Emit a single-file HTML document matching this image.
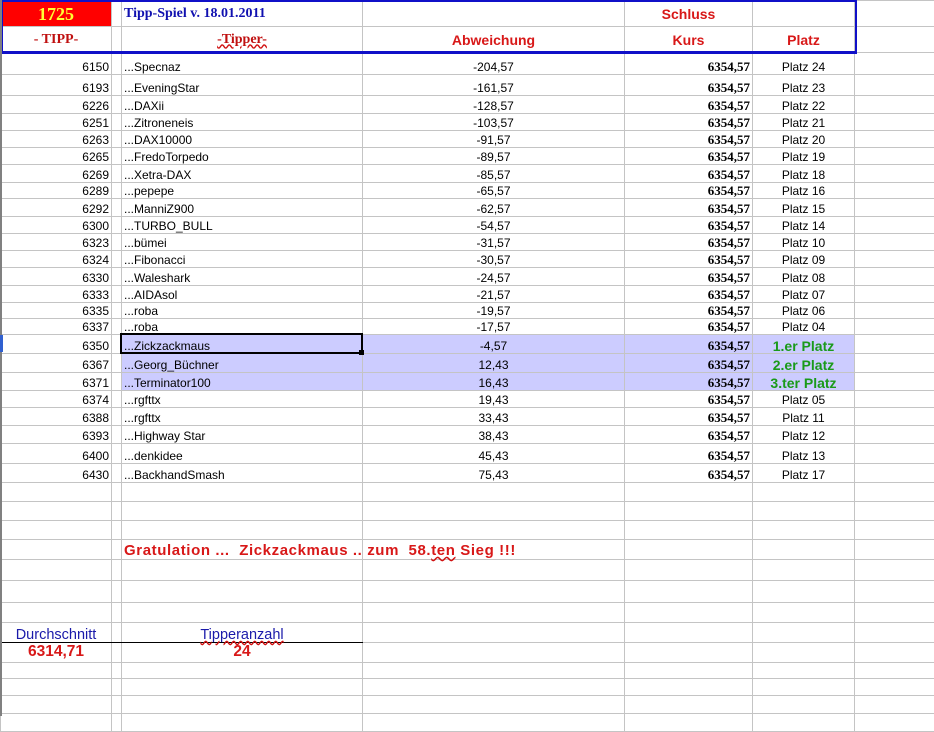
<!DOCTYPE html>
<html><head><meta charset="utf-8"><style>
body{margin:0;width:934px;height:716px;overflow:hidden;background:#fff;position:relative;font-family:"Liberation Sans",Arial,sans-serif;font-size:12px;}
table{border-collapse:collapse;table-layout:fixed;position:absolute;left:0;top:0;width:934px;}
td{border:1px solid #c4c4c4;padding:0 2px;white-space:nowrap;overflow:visible;vertical-align:bottom;line-height:14px;color:#000;}
.r{text-align:right}.c{text-align:center}
.k{font-family:"Liberation Serif",serif;font-weight:bold;font-size:13px;text-align:right}
.hl td.h{background:#ccccff}
.g{color:#1a9a1a;font-weight:bold;font-size:14px;text-align:center}
.red{color:#d81818;font-weight:bold;font-size:14px}
</style></head><body>
<table>
<colgroup><col style="width:111px"><col style="width:10px"><col style="width:241px"><col style="width:262px"><col style="width:128px"><col style="width:102px"><col style="width:80px"></colgroup>
<tr style="height:26px"><td style="background:#ff0000;color:#ffff33;font-family:'Liberation Serif',serif;font-weight:bold;font-size:18px;text-align:center;vertical-align:middle">1725</td><td style="border-left:none;border-right:none"></td><td style="color:#1010b0;font-family:'Liberation Serif',serif;font-weight:bold;font-size:14px;vertical-align:middle">Tipp-Spiel v. 18.01.2011</td><td></td><td class="c red" style="vertical-align:middle">Schluss</td><td></td><td></td></tr>
<tr style="height:26px"><td class="c" style="color:#c01010;font-family:'Liberation Serif',serif;font-weight:bold;font-size:14px;vertical-align:middle">- TIPP-</td><td></td><td class="c" style="color:#c01010;font-family:'Liberation Serif',serif;font-weight:bold;font-size:14px;vertical-align:middle;text-decoration:underline wavy #d01010">-Tipper-</td><td class="c red" style="vertical-align:middle">Abweichung</td><td class="c red" style="vertical-align:middle">Kurs</td><td class="c red" style="vertical-align:middle">Platz</td><td></td></tr>
<tr style="height:22px"><td class="r">6150</td><td></td><td>...Specnaz</td><td class="c">-204,57</td><td class="k">6354,57</td><td class="c">Platz 24</td><td></td></tr>
<tr style="height:21px"><td class="r">6193</td><td></td><td>...EveningStar</td><td class="c">-161,57</td><td class="k">6354,57</td><td class="c">Platz 23</td><td></td></tr>
<tr style="height:18px"><td class="r">6226</td><td></td><td>...DAXii</td><td class="c">-128,57</td><td class="k">6354,57</td><td class="c">Platz 22</td><td></td></tr>
<tr style="height:17px"><td class="r">6251</td><td></td><td>...Zitroneneis</td><td class="c">-103,57</td><td class="k">6354,57</td><td class="c">Platz 21</td><td></td></tr>
<tr style="height:17px"><td class="r">6263</td><td></td><td>...DAX10000</td><td class="c">-91,57</td><td class="k">6354,57</td><td class="c">Platz 20</td><td></td></tr>
<tr style="height:17px"><td class="r">6265</td><td></td><td>...FredoTorpedo</td><td class="c">-89,57</td><td class="k">6354,57</td><td class="c">Platz 19</td><td></td></tr>
<tr style="height:18px"><td class="r">6269</td><td></td><td>...Xetra-DAX</td><td class="c">-85,57</td><td class="k">6354,57</td><td class="c">Platz 18</td><td></td></tr>
<tr style="height:16px"><td class="r">6289</td><td></td><td>...pepepe</td><td class="c">-65,57</td><td class="k">6354,57</td><td class="c">Platz 16</td><td></td></tr>
<tr style="height:18px"><td class="r">6292</td><td></td><td>...ManniZ900</td><td class="c">-62,57</td><td class="k">6354,57</td><td class="c">Platz 15</td><td></td></tr>
<tr style="height:17px"><td class="r">6300</td><td></td><td>...TURBO_BULL</td><td class="c">-54,57</td><td class="k">6354,57</td><td class="c">Platz 14</td><td></td></tr>
<tr style="height:17px"><td class="r">6323</td><td></td><td>...bümei</td><td class="c">-31,57</td><td class="k">6354,57</td><td class="c">Platz 10</td><td></td></tr>
<tr style="height:17px"><td class="r">6324</td><td></td><td>...Fibonacci</td><td class="c">-30,57</td><td class="k">6354,57</td><td class="c">Platz 09</td><td></td></tr>
<tr style="height:18px"><td class="r">6330</td><td></td><td>...Waleshark</td><td class="c">-24,57</td><td class="k">6354,57</td><td class="c">Platz 08</td><td></td></tr>
<tr style="height:17px"><td class="r">6333</td><td></td><td>...AIDAsol</td><td class="c">-21,57</td><td class="k">6354,57</td><td class="c">Platz 07</td><td></td></tr>
<tr style="height:16px"><td class="r">6335</td><td></td><td>...roba</td><td class="c">-19,57</td><td class="k">6354,57</td><td class="c">Platz 06</td><td></td></tr>
<tr style="height:16px"><td class="r">6337</td><td></td><td>...roba</td><td class="c">-17,57</td><td class="k">6354,57</td><td class="c">Platz 04</td><td></td></tr>
<tr class="hl" style="height:19px"><td class="r">6350</td><td></td><td class="h">...Zickzackmaus</td><td class="c h">-4,57</td><td class="k h">6354,57</td><td class="g h">1.er Platz</td><td></td></tr>
<tr class="hl" style="height:19px"><td class="r">6367</td><td></td><td class="h">...Georg_Büchner</td><td class="c h">12,43</td><td class="k h">6354,57</td><td class="g h">2.er Platz</td><td></td></tr>
<tr class="hl" style="height:18px"><td class="r">6371</td><td></td><td class="h">...Terminator100</td><td class="c h">16,43</td><td class="k h">6354,57</td><td class="g h">3.ter Platz</td><td></td></tr>
<tr style="height:17px"><td class="r">6374</td><td></td><td>...rgfttx</td><td class="c">19,43</td><td class="k">6354,57</td><td class="c">Platz 05</td><td></td></tr>
<tr style="height:18px"><td class="r">6388</td><td></td><td>...rgfttx</td><td class="c">33,43</td><td class="k">6354,57</td><td class="c">Platz 11</td><td></td></tr>
<tr style="height:18px"><td class="r">6393</td><td></td><td>...Highway Star</td><td class="c">38,43</td><td class="k">6354,57</td><td class="c">Platz 12</td><td></td></tr>
<tr style="height:20px"><td class="r">6400</td><td></td><td>...denkidee</td><td class="c">45,43</td><td class="k">6354,57</td><td class="c">Platz 13</td><td></td></tr>
<tr style="height:19px"><td class="r">6430</td><td></td><td>...BackhandSmash</td><td class="c">75,43</td><td class="k">6354,57</td><td class="c">Platz 17</td><td></td></tr>
<tr style="height:19px"><td></td><td></td><td></td><td></td><td></td><td></td><td></td></tr>
<tr style="height:19px"><td></td><td></td><td></td><td></td><td></td><td></td><td></td></tr>
<tr style="height:19px"><td></td><td></td><td></td><td></td><td></td><td></td><td></td></tr>
<tr style="height:20px"><td></td><td></td><td class="red" style="font-size:15px;overflow:visible;line-height:17px;letter-spacing:0.6px">Gratulation ...&nbsp; Zickzackmaus .. zum&nbsp; 58.<span style="text-decoration:underline wavy #d01010">ten</span> Sieg !!!</td><td></td><td></td><td></td><td></td></tr>
<tr style="height:21px"><td></td><td></td><td></td><td></td><td></td><td></td><td></td></tr>
<tr style="height:22px"><td></td><td></td><td></td><td></td><td></td><td></td><td></td></tr>
<tr style="height:20px"><td></td><td></td><td></td><td></td><td></td><td></td><td></td></tr>
<tr style="height:20px"><td class="c" style="color:#1a1aaa;font-size:14.5px;border-bottom:1px solid #000">Durchschnitt</td><td style="border-bottom:1px solid #000"></td><td class="c" style="color:#1a1aaa;font-size:14.5px;border-bottom:1px solid #000"><span style="text-decoration:underline wavy #d01010">Tipperanzahl</span></td><td></td><td></td><td></td><td></td></tr>
<tr style="height:20px"><td class="c red" style="vertical-align:top;font-size:15.5px;line-height:17px">6314,71</td><td></td><td class="c red" style="vertical-align:top;font-size:15.5px;line-height:17px">24</td><td></td><td></td><td></td><td></td></tr>
<tr style="height:16px"><td></td><td></td><td></td><td></td><td></td><td></td><td></td></tr>
<tr style="height:17px"><td></td><td></td><td></td><td></td><td></td><td></td><td></td></tr>
<tr style="height:18px"><td></td><td></td><td></td><td></td><td></td><td></td><td></td></tr>
<tr style="height:18px"><td></td><td></td><td></td><td></td><td></td><td></td><td></td></tr>
</table>
<div style="position:absolute;left:1px;top:0;width:852px;height:49px;border:2px solid #1010c8;border-bottom-width:3px;"></div>
<div style="position:absolute;left:120px;top:333px;width:239px;height:17px;border:2px solid #000;"></div>
<div style="position:absolute;left:359px;top:350px;width:5px;height:5px;background:#000;"></div>
<div style="position:absolute;left:0;top:0;width:2px;height:716px;background:#808080;"></div>
<div style="position:absolute;left:0;top:335px;width:3px;height:17px;background:#3060d0;"></div>
</body></html>
